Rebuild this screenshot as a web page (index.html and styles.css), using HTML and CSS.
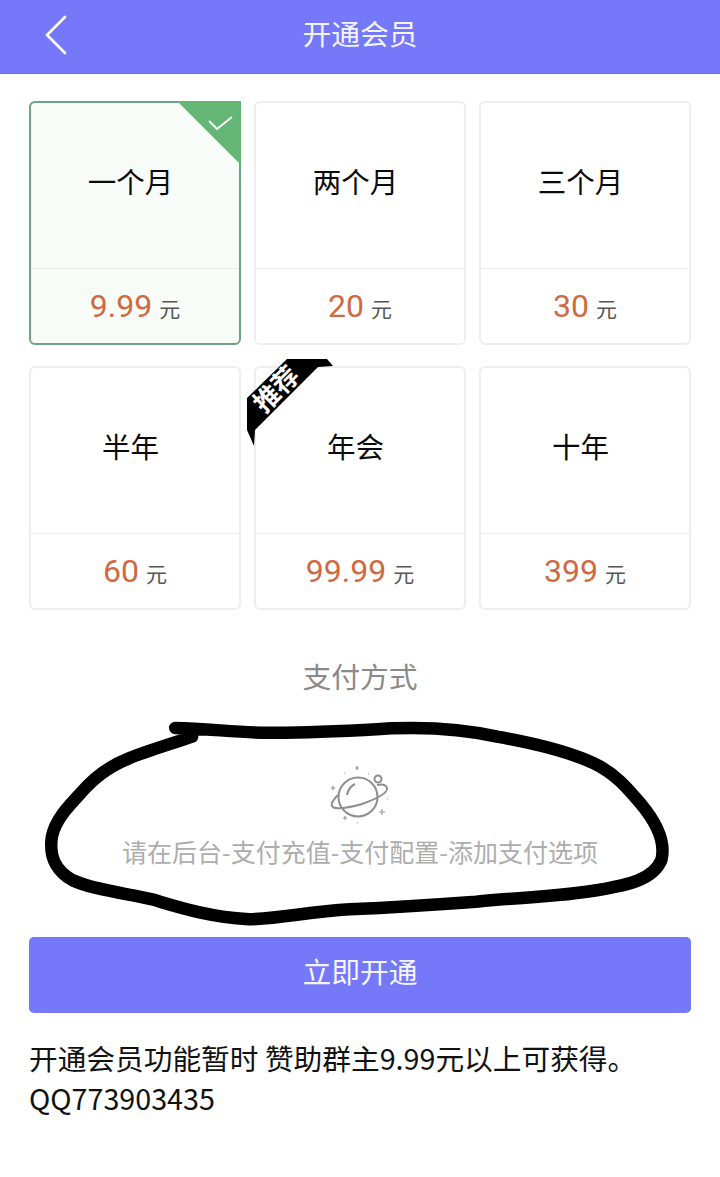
FILE: index.html
```html
<!DOCTYPE html>
<html lang="zh">
<head>
<meta charset="utf-8">
<title>开通会员</title>
<link rel="stylesheet" href="styles.css">
</head>
<body>
<header class="topbar">
  <svg class="back" viewBox="0 0 24 40" aria-hidden="true"><path d="M21 2 L3 20 L21 38"/></svg>
  <h1 class="topbar-title">开通会员</h1>
</header>
<main class="page">
  <section class="plans">
    <div class="plan plan-active">
      <svg class="corner" viewBox="0 0 64 64" aria-hidden="true"><path class="corner-bg" d="M0 0H64V64Z"/><path class="corner-check" d="M32 20 L40 28 L55 16"/></svg>
      <div class="plan-name">一个月</div>
      <div class="plan-price"><span class="amount">9.99</span><span class="unit">元</span></div>
    </div>
    <div class="plan">
      <div class="plan-name">两个月</div>
      <div class="plan-price"><span class="amount">20</span><span class="unit">元</span></div>
    </div>
    <div class="plan">
      <div class="plan-name">三个月</div>
      <div class="plan-price"><span class="amount">30</span><span class="unit">元</span></div>
    </div>
    <div class="plan">
      <div class="plan-name">半年</div>
      <div class="plan-price"><span class="amount">60</span><span class="unit">元</span></div>
    </div>
    <div class="plan">
      <svg class="ribbon" viewBox="0 0 86 88" aria-hidden="true"><path d="M0 39 L40 0 H80 L86 7 L71 8 L8 71 L7 87 L0 71Z"/></svg>
      <span class="ribbon-text">推荐</span>
      <div class="plan-name">年会</div>
      <div class="plan-price"><span class="amount">99.99</span><span class="unit">元</span></div>
    </div>
    <div class="plan">
      <div class="plan-name">十年</div>
      <div class="plan-price"><span class="amount">399</span><span class="unit">元</span></div>
    </div>
  </section>

  <h2 class="pay-title">支付方式</h2>

  <section class="pay-empty">
    <svg class="planet" viewBox="0 0 60 60" aria-hidden="true">
      <circle class="ln" cx="28" cy="31" r="19.500"/>
      <path class="ln" d="M8 29 C3 34 1 38 2 40 C4 44 18 42 32 38 C46 33 58 27 57 22 C56 19 52 18 47 19"/>
      <path class="ln" d="M17 29 C18 24 21 20 25 18"/>
      <circle class="ln" cx="48" cy="13" r="3.500"/>
      <path class="star" d="M27 0v4M25 2h4M3 19.500v5M0.500 22h5M52 43v6M49 46h6M15 50v4M13 52h4"/>
      <path class="star" d="M14 7h1M38 8h1M57 33h1M27 57h1"/>
    </svg>
    <p class="pay-hint">请在后台-支付充值-支付配置-添加支付选项</p>
    <svg class="scribble" viewBox="0 0 1568 690" preserveAspectRatio="none" aria-hidden="true">
      <path d="M385 80 C330 104 280 122 235 145 C185 170 150 205 120 250 C90 290 60 330 52 380 C45 440 60 480 100 510 C150 540 230 550 290 568 C350 590 420 620 520 628 C600 625 660 605 760 598 C860 592 950 585 1060 575 C1160 562 1260 560 1350 540 C1420 525 1480 510 1500 450 C1510 400 1490 340 1450 280 C1420 235 1390 190 1340 160 C1280 125 1200 100 1110 80 C1040 60 960 50 860 55 C760 62 660 70 560 68 C490 68 420 55 345 54"/>
    </svg>
  </section>

  <button class="submit" type="button">立即开通</button>
  <p class="note">开通会员功能暂时 赞助群主9.99元以上可获得。<br>QQ773903435</p>
</main>
</body>
</html>
```

FILE: styles.css
```css
* { box-sizing: border-box; }
html, body { margin: 0; padding: 0; }
body {
  width: 720px;
  height: 1177px;
  overflow: hidden;
  background: #fff;
  color: #000;
  font-family: "Noto Sans CJK SC", "Roboto", sans-serif;
}
.topbar {
  position: relative;
  height: 74px;
  padding-bottom: 8px;
  background: #7578f8;
  display: flex;
  align-items: center;
  justify-content: center;
  border-bottom: 1px solid #6d70dc;
}
.back {
  position: absolute;
  left: 44px;
  top: 15px;
  width: 24px;
  height: 40px;
}
.back path { fill: none; stroke: #fff; stroke-width: 2.6; stroke-linecap: round; stroke-linejoin: miter; }
.topbar-title {
  margin: 0;
  font-size: 28.800px;
  font-weight: 400;
  line-height: 40px;
  color: #f4f4ff;
}
.page { padding: 27px 29px 0; }
.plans {
  display: grid;
  grid-template-columns: repeat(3, 212px);
  grid-auto-rows: 244px;
  column-gap: 13px;
  row-gap: 21px;
}
.plan {
  position: relative;
  display: flex;
  flex-direction: column;
  border: 2px solid #eeeeee;
  border-radius: 6px;
  background: #fff;
}
.plan-active {
  border-color: #6fa283;
  background: #f7fcf9;
}
.plan-name {
  height: 166px;
  border-bottom: 1px solid #ececec;
  display: flex;
  align-items: center;
  justify-content: center;
  padding: 0 9px 10px 0;
  font-size: 28.500px;
  line-height: 40px;
  color: #0a0a0a;
}
.plan-price {
  flex: 1;
  display: flex;
  align-items: baseline;
  justify-content: center;
  padding-top: 15px;
  line-height: 44px;
}
.amount {
  font-family: "Roboto", sans-serif;
  font-size: 32px;
  color: #d0693f;
}
.unit {
  margin-left: 7px;
  font-size: 21px;
  color: #555;
}
.corner {
  position: absolute;
  right: -2px;
  top: -2px;
  width: 64px;
  height: 64px;
}
.corner-bg { fill: #63b673; }
.corner-check { fill: none; stroke: #fff; stroke-width: 2; }
.ribbon {
  position: absolute;
  left: -9px;
  top: -9px;
  width: 86px;
  height: 88px;
}
.ribbon path { fill: #000; }
.ribbon-text {
  position: absolute;
  left: -10px;
  top: 4px;
  width: 58px;
  text-align: center;
  font-size: 26px;
  line-height: 32px;
  font-weight: 700;
  color: #fff;
  transform: rotate(-45deg);
}
.pay-title {
  margin: 44px 0 0;
  text-align: center;
  font-size: 28.800px;
  font-weight: 400;
  line-height: 44px;
  color: #8a8a8a;
}
.pay-empty {
  position: relative;
  height: 239px;
  display: flex;
  flex-direction: column;
  align-items: center;
  padding-top: 68px;
}
.planet { width: 60px; height: 60px; }
.ln { fill: none; stroke: #8e8e8e; stroke-width: 2; }
.star { fill: none; stroke: #9a9a9a; stroke-width: 1.2; }
.pay-hint {
  margin: 7px 0 0;
  font-size: 25px;
  line-height: 36px;
  color: #adadad;
  white-space: nowrap;
}
.scribble {
  position: absolute;
  left: 1px;
  top: 12px;
  width: 660px;
  height: 230px;
  pointer-events: none;
}
.scribble path {
  fill: none;
  stroke: #000;
  stroke-width: 12.500px;
  stroke-linecap: round;
  stroke-linejoin: round;
  vector-effect: non-scaling-stroke;
}
.submit {
  display: block;
  width: 662px;
  height: 76px;
  margin: 0;
  padding: 0 0 9px;
  border: 0;
  border-radius: 5px;
  background: #7578f8;
  color: #f4f4ff;
  font-family: inherit;
  font-size: 28.800px;
}
.note {
  margin: 25px 0 0;
  font-size: 28.700px;
  line-height: 40px;
  color: #111;
}
```
